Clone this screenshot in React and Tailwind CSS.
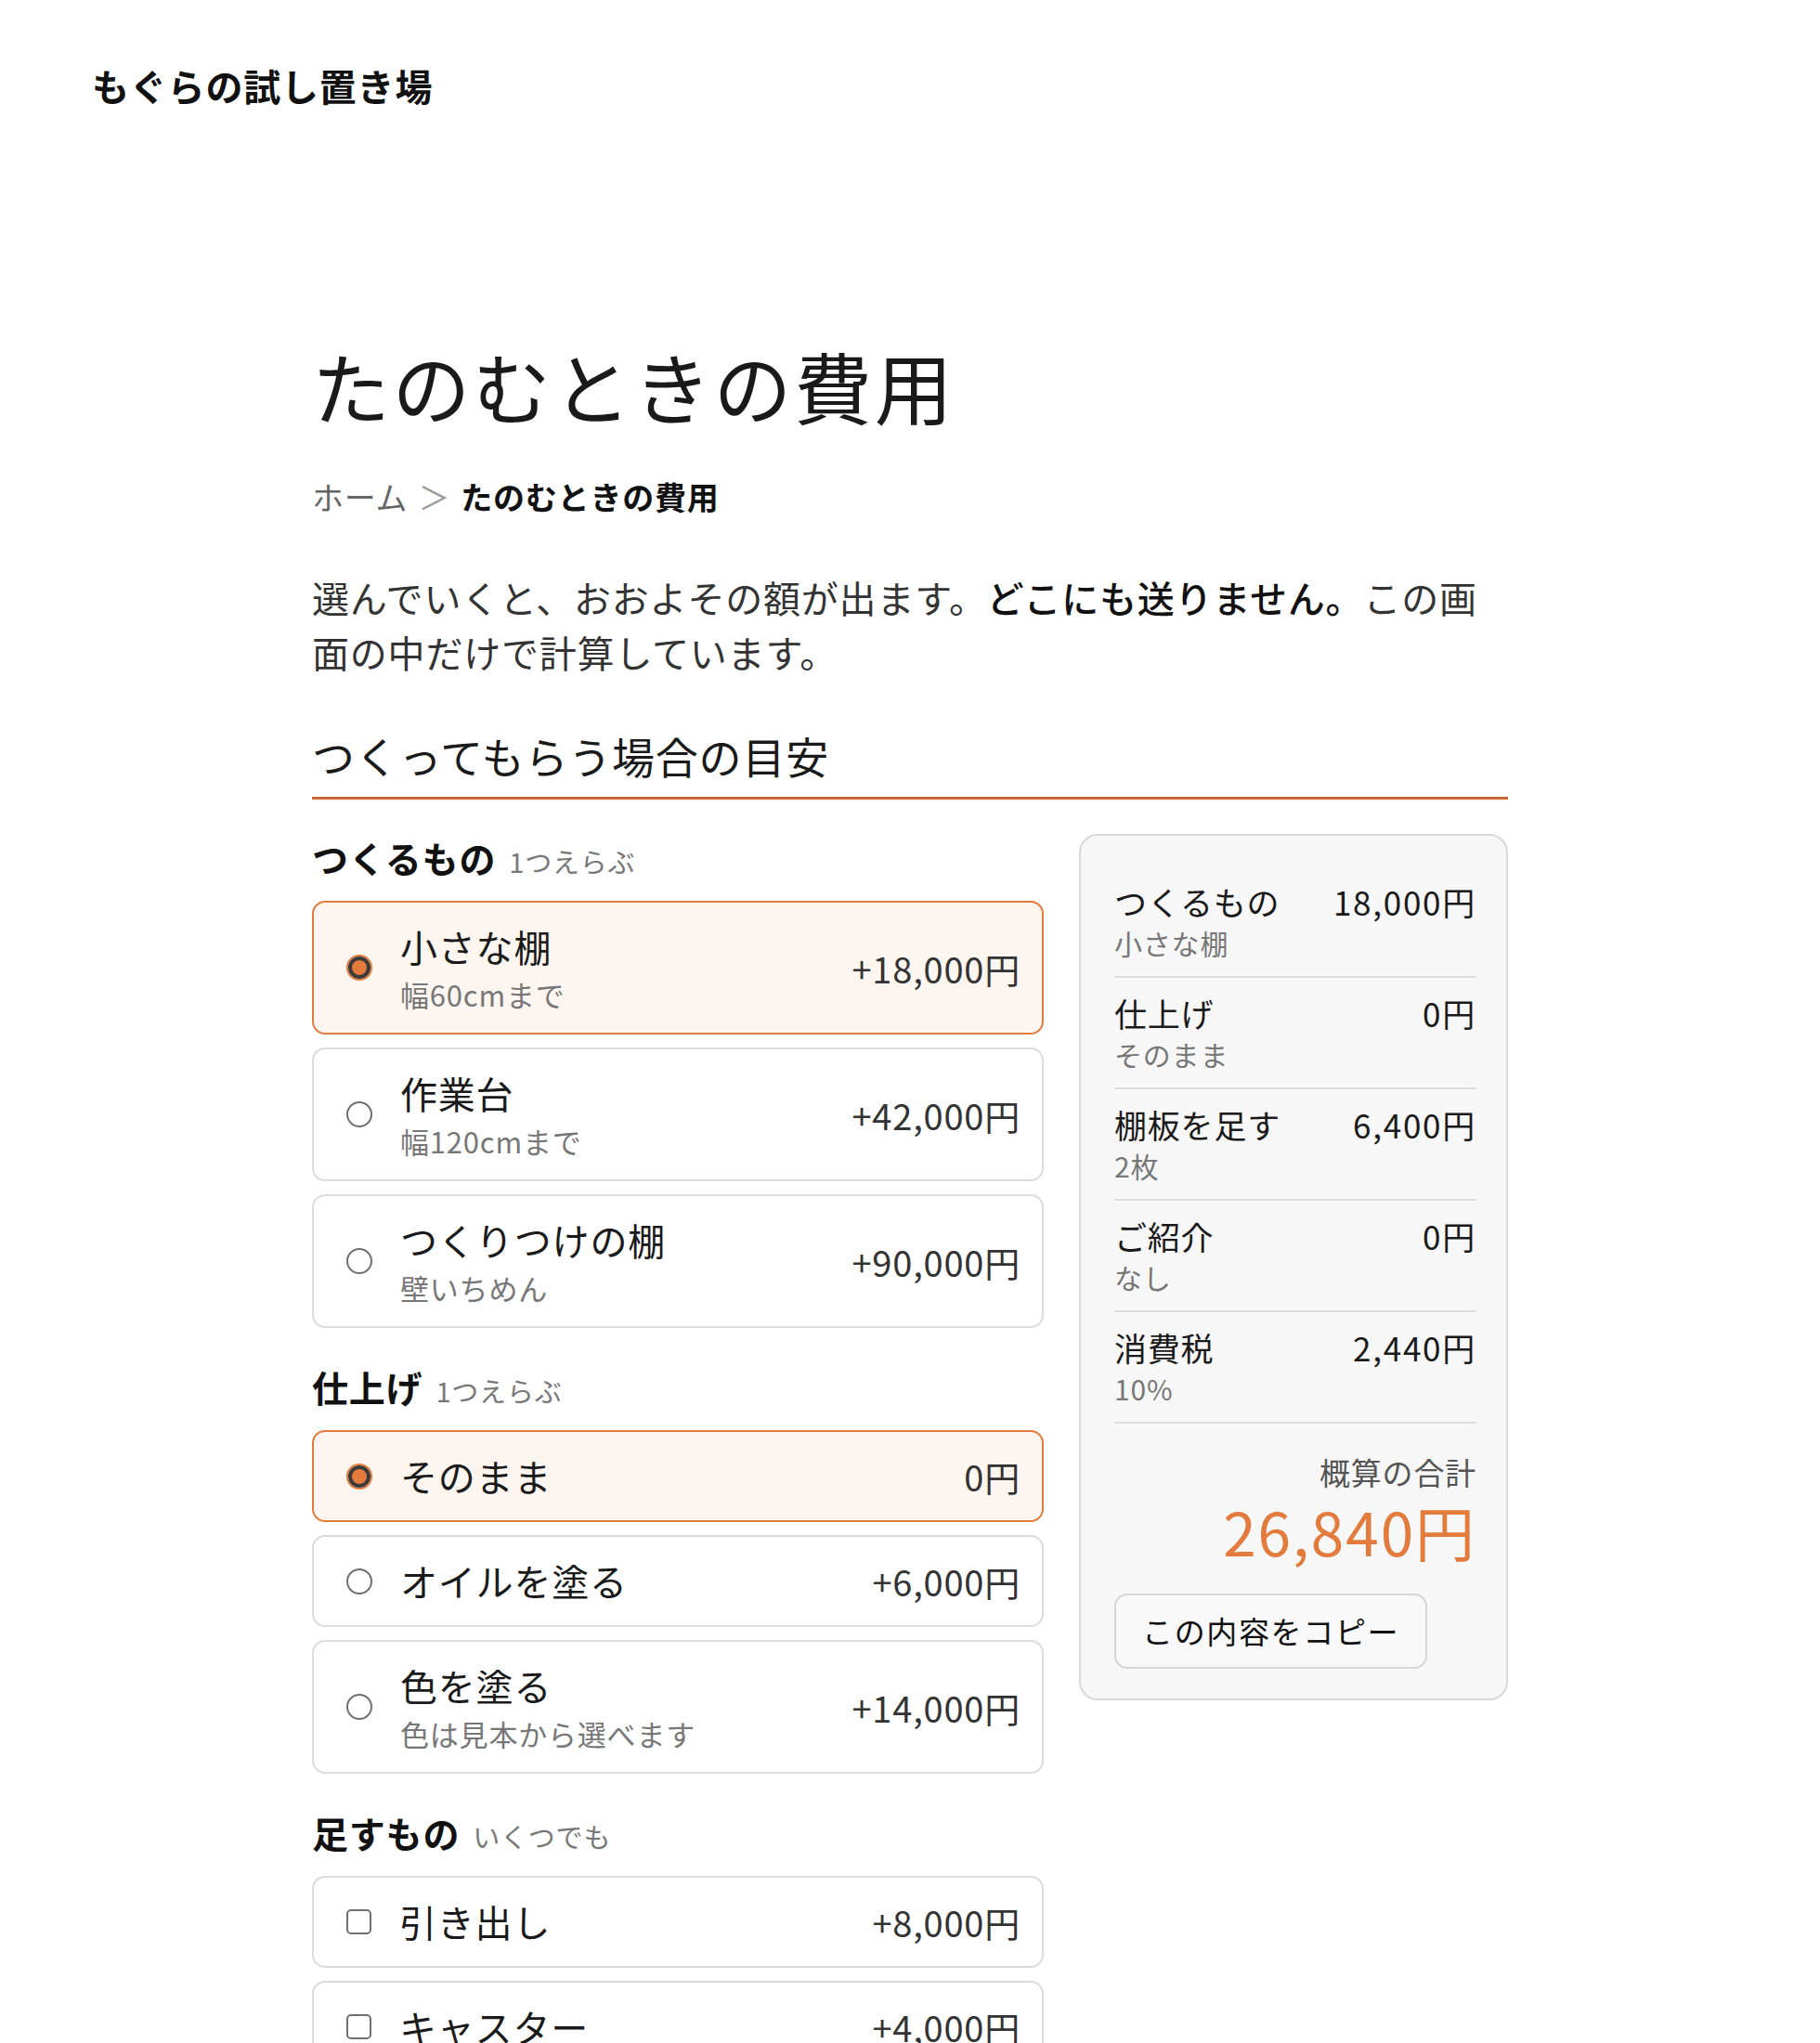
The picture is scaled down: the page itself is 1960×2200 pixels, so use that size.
import React from "react";

const sections = [
  {
    title: "つくるもの",
    hint: "1つえらぶ",
    type: "radio",
    items: [
      { name: "小さな棚", sub: "幅60cmまで", price: "+18,000円", on: true },
      { name: "作業台", sub: "幅120cmまで", price: "+42,000円" },
      { name: "つくりつけの棚", sub: "壁いちめん", price: "+90,000円" },
    ],
  },
  {
    title: "仕上げ",
    hint: "1つえらぶ",
    type: "radio",
    items: [
      { name: "そのまま", price: "0円", on: true },
      { name: "オイルを塗る", price: "+6,000円" },
      { name: "色を塗る", sub: "色は見本から選べます", price: "+14,000円" },
    ],
  },
  {
    title: "足すもの",
    hint: "いくつでも",
    type: "check",
    items: [
      { name: "引き出し", price: "+8,000円" },
      { name: "キャスター", price: "+4,000円" },
    ],
  },
];

const summary = [
  { label: "つくるもの", value: "18,000円", sub: "小さな棚" },
  { label: "仕上げ", value: "0円", sub: "そのまま" },
  { label: "棚板を足す", value: "6,400円", sub: "2枚" },
  { label: "ご紹介", value: "0円", sub: "なし" },
  { label: "消費税", value: "2,440円", sub: "10%" },
];

function Mark({ type, on }) {
  if (type === "check") {
    return (
      <span className="block w-[27px] h-[27px] shrink-0 rounded-[5px] border-2 border-[#707070] bg-white" />
    );
  }
  if (on) {
    return (
      <span className="block w-[28px] h-[28px] shrink-0 rounded-full border-[2px] border-[#e27b3c]">
        <span className="block w-full h-full rounded-full border-[4px] border-[#3a3a3a] bg-[#e27b3c]" />
      </span>
    );
  }
  return (
    <span className="block w-[28px] h-[28px] shrink-0 rounded-full border-[2.5px] border-[#707070] bg-white" />
  );
}

function OptionCard({ item, type }) {
  const on = item.on;
  return (
    <div
      className={
        "flex items-center rounded-[14px] border-2 pl-[35px] pr-[23px] py-[19px] " +
        (on ? "border-[#e27b3c] bg-[#fdf5ef]" : "border-[#dcdcdc] bg-white")
      }
    >
      <Mark type={type} on={on} />
      <div className="ml-[30px] flex-1 min-w-0 flex flex-col">
        <span className="text-[40px] leading-[57px] text-[#1a1a1a]">{item.name}</span>
        {item.sub && (
          <span className="text-[31px] leading-[45px] text-[#777777]">{item.sub}</span>
        )}
      </div>
      <span className="shrink-0 text-[38px] leading-[57px] text-[#333333]">{item.price}</span>
    </div>
  );
}

export default function App() {
  return (
    <div className="min-h-screen bg-white font-['Noto_Sans_CJK_JP','Noto_Sans_CJK_SC',sans-serif] tracking-[0.05em] text-[#1a1a1a]">
      <header className="pt-[62px] pl-[99px]">
        <div className="text-[40px] leading-[60px] font-bold text-[#111111]">もぐらの試し置き場</div>
      </header>

      <main className="mx-auto w-[1288px] pt-[244px] pb-[40px]">
        <h1 className="text-[84px] leading-[98px] font-normal tracking-[0.03em] text-[#1a1a1a]">
          たのむときの費用
        </h1>

        <nav className="mt-[48px] flex items-center text-[34px] leading-[46px]">
          <span className="text-[#666666]">ホーム</span>
          <span className="mx-[11px] text-[#9a9a9a]">＞</span>
          <span className="font-bold text-[#111111]">たのむときの費用</span>
        </nav>

        <p className="mt-[56px] text-[40px] leading-[59px] text-[#333333] whitespace-nowrap">
          選んでいくと、おおよその額が出ます。
          <span className="font-medium text-[#111111]">どこにも送りません。</span>
          この画
          <br />
          面の中だけで計算しています。
        </p>

        <h2 className="mt-[50px] pb-[14px] border-b-[3px] border-[#c86a33] text-[46px] leading-[62px] font-normal text-[#1a1a1a]">
          つくってもらう場合の目安
        </h2>

        <div className="mt-[37px] grid grid-cols-[788px_462px] gap-x-[38px] items-start">
          <div className="flex flex-col gap-[38px]">
            {sections.map((s) => (
              <section key={s.title}>
                <div className="flex items-baseline mb-[18px]">
                  <span className="text-[39px] leading-[50px] font-bold text-[#111111]">{s.title}</span>
                  <span className="ml-[14px] text-[29px] leading-[50px] text-[#777777]">{s.hint}</span>
                </div>
                <div className="flex flex-col gap-[14px]">
                  {s.items.map((it) => (
                    <OptionCard key={it.name} item={it} type={s.type} />
                  ))}
                </div>
              </section>
            ))}
          </div>

          <aside className="rounded-[20px] border-2 border-[#d9d9d9] bg-[#f7f7f7] pl-[36px] pr-[32px] pt-[33px] pb-[32px]">
            {summary.map((r) => (
              <div key={r.label} className="py-[15px] border-b-2 border-[#dcdcdc]">
                <div className="flex justify-between items-baseline">
                  <span className="text-[35px] leading-[46px] text-[#1a1a1a]">{r.label}</span>
                  <span className="text-[35px] leading-[46px] text-[#1a1a1a] tabular-nums tracking-[0.05em]">{r.value}</span>
                </div>
                <div className="text-[30px] leading-[42px] text-[#777777]">{r.sub}</div>
              </div>
            ))}
            <div className="pt-[30px] text-right">
              <div className="text-[33px] leading-[44px] text-[#555555]">概算の合計</div>
              <div className="mt-[3px] text-[64px] leading-[76px] text-[#e27b3c] tracking-[0.03em]">26,840円</div>
            </div>
            <div className="mt-[30px]">
              <button className="h-[81px] px-[28px] rounded-[14px] border-2 border-[#d6d6d6] bg-[#f8f8f8] text-[33px] text-[#111111] tracking-[0.05em]">
                この内容をコピー
              </button>
            </div>
          </aside>
        </div>
      </main>
    </div>
  );
}
